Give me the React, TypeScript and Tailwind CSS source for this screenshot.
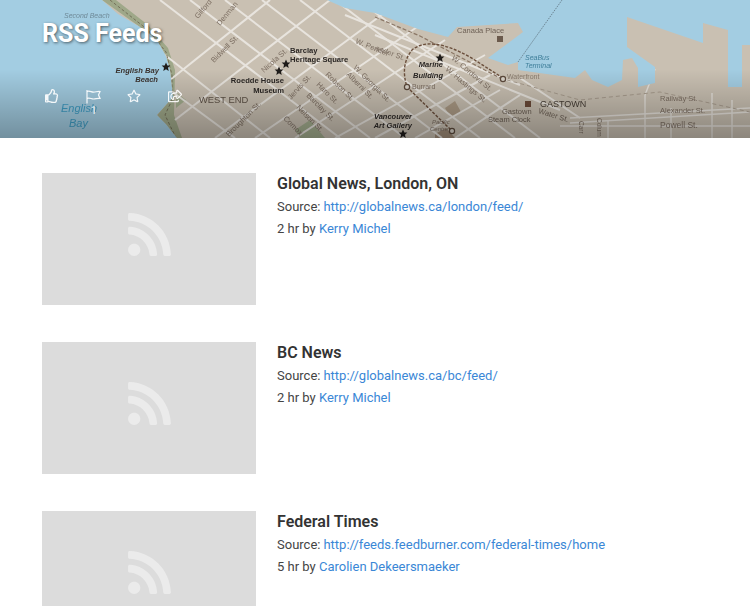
import React from 'react';
import { FaRegThumbsUp, FaRegStar, FaRegShareSquare, FaRss } from 'react-icons/fa';

const LAND =
  '102,0 118,14 140,27 157,40 166,56 170,70 173,97 157,115 166,124 177,138 750,138 750,45 742,45 742,87 728,87 728,30 703,23 703,43 627,17 627,47 655,67 655,83 638,87 638,68 632,58 623,60 622,80 608,87 592,80 585,70 575,78 518,70 518,62 508,65 488,58 523,32 518,23 457,27 448,37 418,29 375,13 345,8 327,0';

// street grid, [x1, y1, x2, y2]
const STREETS: number[][] = [
  [160, 0, 340, 138], [190, 0, 370, 138], [225, 0, 405, 138], [262, 0, 442, 138], [300, 0, 480, 138],
  [335, 0, 515, 138], [372, 10, 540, 138], [165, 55, 270, 138], [170, 90, 235, 138],
  [170, 80, 270, 0], [175, 120, 330, 0], [215, 138, 395, 5], [255, 138, 420, 25], [295, 138, 445, 40],
  [335, 138, 485, 55], [375, 138, 490, 75], [415, 138, 500, 90], [455, 138, 520, 95],
  [345, 15, 520, 85], [375, 35, 560, 110], [520, 78, 580, 118],
];

const STREETS_THIN: number[][] = [
  [570, 123, 750, 112], [570, 118, 750, 108], [560, 126, 750, 126], [645, 138, 645, 95], [645, 95, 655, 69],
  [671, 138, 671, 108], [712, 138, 712, 93], [732, 138, 732, 100], [608, 138, 608, 120],
];

type Label = { x: number; y: number; t: string; size: number; fill: string; bold?: boolean; italic?: boolean; rot?: number; anchor?: 'start' | 'end' };

const LABELS: Label[] = [
  { x: 64, y: 18, t: 'Second Beach', size: 7, fill: '#6f8a98', italic: true },
  { x: 159, y: 73, t: 'English Bay', size: 7.6, fill: '#3c3430', bold: true, italic: true, anchor: 'end' },
  { x: 158, y: 82, t: 'Beach', size: 7.6, fill: '#3c3430', bold: true, italic: true, anchor: 'end' },
  { x: 290, y: 53, t: 'Barclay', size: 7.6, fill: '#2c2826', bold: true },
  { x: 290, y: 62, t: 'Heritage Square', size: 7.6, fill: '#2c2826', bold: true },
  { x: 284, y: 83, t: 'Roedde House', size: 7.6, fill: '#2c2826', bold: true, anchor: 'end' },
  { x: 284, y: 93, t: 'Museum', size: 7.6, fill: '#2c2826', bold: true, anchor: 'end' },
  { x: 199, y: 103, t: 'WEST END', size: 9.4, fill: '#5f5348' },
  { x: 61, y: 112, t: 'English', size: 11, fill: '#3f9dc4', italic: true },
  { x: 69, y: 127, t: 'Bay', size: 11, fill: '#3f9dc4', italic: true },
  { x: 214, y: 63, t: 'Bidwell St.', size: 7.5, fill: '#7c6e62', rot: -45 },
  { x: 220, y: 26, t: 'Denman', size: 7.5, fill: '#7c6e62', rot: -50 },
  { x: 198, y: 19, t: 'Gilford', size: 7.5, fill: '#7c6e62', rot: -50 },
  { x: 264, y: 73, t: 'Nicola St.', size: 7.5, fill: '#7c6e62', rot: -42 },
  { x: 291, y: 100, t: 'Jervis St.', size: 7.5, fill: '#7c6e62', rot: -48 },
  { x: 325, y: 75, t: 'Robson St.', size: 7.5, fill: '#7c6e62', rot: 45 },
  { x: 316, y: 85, t: 'Haro St.', size: 7.5, fill: '#7c6e62', rot: 45 },
  { x: 306, y: 96, t: 'Barclay St.', size: 7.5, fill: '#7c6e62', rot: 45 },
  { x: 296, y: 108, t: 'Nelson St.', size: 7.5, fill: '#7c6e62', rot: 45 },
  { x: 283, y: 119, t: 'Comox', size: 7.5, fill: '#7c6e62', rot: 45 },
  { x: 229, y: 137, t: 'Broughton St.', size: 7.5, fill: '#7c6e62', rot: -45 },
  { x: 355, y: 43, t: 'W. Pender', size: 7.5, fill: '#7c6e62', rot: 22 },
  { x: 353, y: 68, t: 'W. Georgia St.', size: 7.5, fill: '#7c6e62', rot: 45 },
  { x: 346, y: 75, t: 'Alberni St.', size: 7.5, fill: '#7c6e62', rot: 45 },
  { x: 457, y: 33, t: 'Canada Place', size: 7.5, fill: '#6f6257' },
  { x: 525, y: 60, t: 'SeaBus', size: 7, fill: '#3f7f9a', italic: true },
  { x: 525, y: 68, t: 'Terminal', size: 7, fill: '#3f7f9a', italic: true },
  { x: 507, y: 79, t: 'Waterfront', size: 7, fill: '#8a7c6e' },
  { x: 443, y: 67, t: 'Marine', size: 7.5, fill: '#2c2826', bold: true, italic: true, anchor: 'end' },
  { x: 443, y: 78, t: 'Building', size: 7.5, fill: '#2c2826', bold: true, italic: true, anchor: 'end' },
  { x: 412, y: 89, t: 'Burrard', size: 7, fill: '#7c6e62' },
  { x: 451, y: 59, t: 'W. Cordova St.', size: 7.5, fill: '#7c6e62', rot: 40 },
  { x: 445, y: 70, t: 'W. Hastings St.', size: 7.5, fill: '#7c6e62', rot: 40 },
  { x: 375, y: 50, t: 'ander St.', size: 7.5, fill: '#7c6e62', rot: 20 },
  { x: 540, y: 107, t: 'GASTOWN', size: 9, fill: '#463d35' },
  { x: 502, y: 114, t: 'Gastown', size: 7.5, fill: '#6b5f54' },
  { x: 488, y: 122, t: 'Steam Clock', size: 7.5, fill: '#6b5f54' },
  { x: 538, y: 113, t: 'Water St.', size: 7.5, fill: '#6b5f54', rot: 17 },
  { x: 660, y: 101, t: 'Railway St.', size: 7.5, fill: '#7c6e62' },
  { x: 660, y: 113, t: 'Alexander St.', size: 7.5, fill: '#7c6e62' },
  { x: 660, y: 128, t: 'Powell St.', size: 8.5, fill: '#7c6e62' },
  { x: 412, y: 119, t: 'Vancouver', size: 7.5, fill: '#2c2826', bold: true, italic: true, anchor: 'end' },
  { x: 412, y: 128, t: 'Art Gallery', size: 7.5, fill: '#2c2826', bold: true, italic: true, anchor: 'end' },
  { x: 432, y: 124, t: 'Pacific', size: 6, fill: '#7c6e62', italic: true },
  { x: 430, y: 131, t: 'Centre', size: 6, fill: '#7c6e62', italic: true },
  { x: 579, y: 121, t: 'Carr', size: 6.5, fill: '#7c6e62', rot: 90 },
  { x: 597, y: 118, t: 'Colum', size: 6.5, fill: '#7c6e62', rot: 90 },
];

const STARS = [[166, 67], [286, 64], [279, 71], [440, 58], [403, 134]];

const Star = ({ x, y }: { x: number; y: number }) => (
  <path
    transform={`translate(${x} ${y}) scale(0.46)`}
    d="M0 -10 L2.9 -3.1 L9.5 -3.1 L4.3 1.7 L5.9 8.5 L0 4.8 L-5.9 8.5 L-4.3 1.7 L-9.5 -3.1 L-2.9 -3.1 Z"
    fill="#1f1c1a"
  />
);

const MapArt = () => (
  <svg viewBox="0 0 750 138" className="absolute inset-0 h-full w-full blur-[0.6px]" style={{ fontFamily: '"Liberation Sans", sans-serif' }}>
    <defs>
      <clipPath id="land"><polygon points={LAND} /></clipPath>
    </defs>
    <rect width="750" height="138" fill="#a3cde2" />
    <polygon points={LAND} fill="#c9c0b2" />
    <g clipPath="url(#land)">
      <path d="M102 0 L140 27 L157 40 L166 56 L170 70 L173 97 L157 115 L177 138 L182 138 L174 115 L175 70 L168 48 L148 25 L116 0 Z" fill="#9fa889" />
      <polygon points="176,92 186,100 176,108" fill="#a3ad8e" />
      <polygon points="295,130 310,120 325,138 300,138" fill="#a3ad8e" />
      <polygon points="445,108 455,101 461,112 451,118" fill="#ab9a85" />
      <polygon points="435,134 446,128 455,138 435,138" fill="#a08c78" />
      {STREETS.map((s, i) => (
        <line key={i} x1={s[0]} y1={s[1]} x2={s[2]} y2={s[3]} stroke="#e8e4de" strokeWidth="2" />
      ))}
      {STREETS_THIN.map((s, i) => (
        <line key={i} x1={s[0]} y1={s[1]} x2={s[2]} y2={s[3]} stroke="#e6e2dc" strokeWidth="1.4" />
      ))}
      <path d="M110 0 L148 30 L166 52 L172 75 L172 100 L165 115 L176 138" fill="none" stroke="#6f6a55" strokeWidth="0.9" strokeDasharray="3 2" />
      <path d="M500 78 L580 100 L660 92 L750 112" fill="none" stroke="#a89c8e" strokeWidth="1" strokeDasharray="4 3" />
    </g>
    <path d="M375 17 L420 36 L500 78" fill="none" stroke="#8b7766" strokeWidth="1.2" strokeDasharray="4 2" />
    <path d="M503 78 L470 57 Q430 35 412 50 Q400 65 407 87 L451 130" fill="none" stroke="#6b4f3c" strokeWidth="1.4" strokeDasharray="3 1.5" />
    <path d="M518 62 L562 0" fill="none" stroke="#5f7480" strokeWidth="0.8" strokeDasharray="1.5 1" />
    <circle cx="503" cy="79" r="2.6" fill="#d8d2c8" stroke="#5c4a3c" strokeWidth="1.2" />
    <circle cx="407" cy="87" r="2.6" fill="#d8d2c8" stroke="#5c4a3c" strokeWidth="1.2" />
    <circle cx="452" cy="131" r="2.6" fill="#d8d2c8" stroke="#5c4a3c" strokeWidth="1.2" />
    <rect x="497" y="36" width="6" height="6" fill="#6b5a4c" />
    <rect x="525" y="101" width="6" height="6" fill="#6b4a38" />
    {STARS.map((p, i) => <Star key={i} x={p[0]} y={p[1]} />)}
    {LABELS.map((l, i) => (
      <text
        key={i}
        x={l.x}
        y={l.y}
        fontSize={l.size}
        fill={l.fill}
        fontWeight={l.bold ? 700 : 400}
        fontStyle={l.italic ? 'italic' : 'normal'}
        textAnchor={l.anchor ?? 'start'}
        transform={l.rot ? `rotate(${l.rot} ${l.x} ${l.y})` : undefined}
      >
        {l.t}
      </text>
    ))}
  </svg>
);

// banner style flag, pole on the left and a wavy two tailed cloth
const BannerFlag = () => (
  <svg viewBox="0 0 15 15" className="h-[15px] w-[15px]" fill="none" stroke="currentColor" strokeWidth="1.2">
    <path d="M1 1v13.5" />
    <path d="M1 2.5c3-1 4 .6 6.5.6s3.5-.9 6.5-.6L12.5 6l1.5 3.4c-3-.3-4 .6-6.5.6S4 8.4 1 9.4" />
  </svg>
);

const FEEDS = [
  { title: 'Global News, London, ON', url: 'http://globalnews.ca/london/feed/', age: '2 hr', author: 'Kerry Michel' },
  { title: 'BC News', url: 'http://globalnews.ca/bc/feed/', age: '2 hr', author: 'Kerry Michel' },
  { title: 'Federal Times', url: 'http://feeds.feedburner.com/federal-times/home', age: '5 hr', author: 'Carolien Dekeersmaeker' },
];

const FeedRow = ({ feed }: { feed: (typeof FEEDS)[number] }) => (
  <div className="flex shrink-0 gap-[21px]">
    <div className="flex h-[132px] w-[214px] shrink-0 items-center justify-center bg-[#dcdcdc] pb-[9px]">
      <FaRss className="h-[49px] w-[49px] text-[#ebebeb]" />
    </div>
    <div className="flex flex-col pt-[1px] text-[13px] text-[#444]">
      <h2 className="mb-[2px] h-[20px] text-[16px] leading-[20px] font-semibold text-[#333]">{feed.title}</h2>
      <p className="h-[22px] leading-[22px]">
        Source:
        <a className="ml-[3px] text-[#3a87d6]">{feed.url}</a>
      </p>
      <p className="h-[22px] leading-[22px]">
        {feed.age} by <a className="text-[#3a87d6]">{feed.author}</a>
      </p>
    </div>
  </div>
);

const App: React.FC = () => {
  return (
    <div className="flex h-[606px] w-[750px] flex-col overflow-hidden bg-white font-['Roboto',sans-serif]">
      <header className="relative h-[138px] shrink-0 overflow-hidden">
        <MapArt />
        <div className="absolute inset-0 bg-gradient-to-b from-transparent from-50% to-black/30" />
        <div className="relative flex h-full flex-col pl-[42px]">
          <h1 className="mt-[17px] text-[25px] leading-[34px] font-bold text-white [text-shadow:1px_1px_3px_rgba(0,0,0,0.55)]">RSS Feeds</h1>
          <div className="mt-[38px] ml-[3px] flex text-white/90">
            <span className="w-[41px]"><FaRegThumbsUp className="h-[14px] w-[14px]" /></span>
            <span className="relative w-[41px]">
              <BannerFlag />
              <span className="absolute top-[16px] left-[5px] text-[10px] leading-[12px]">1</span>
            </span>
            <span className="w-[41px]"><FaRegStar className="h-[14px] w-[14px]" /></span>
            <span className="w-[41px]"><FaRegShareSquare className="h-[14px] w-[14px]" /></span>
          </div>
        </div>
      </header>
      <main className="flex flex-col gap-[37px] pt-[35px] pl-[42px]">
        {FEEDS.map((feed) => <FeedRow key={feed.title} feed={feed} />)}
      </main>
    </div>
  );
};

export default App;
